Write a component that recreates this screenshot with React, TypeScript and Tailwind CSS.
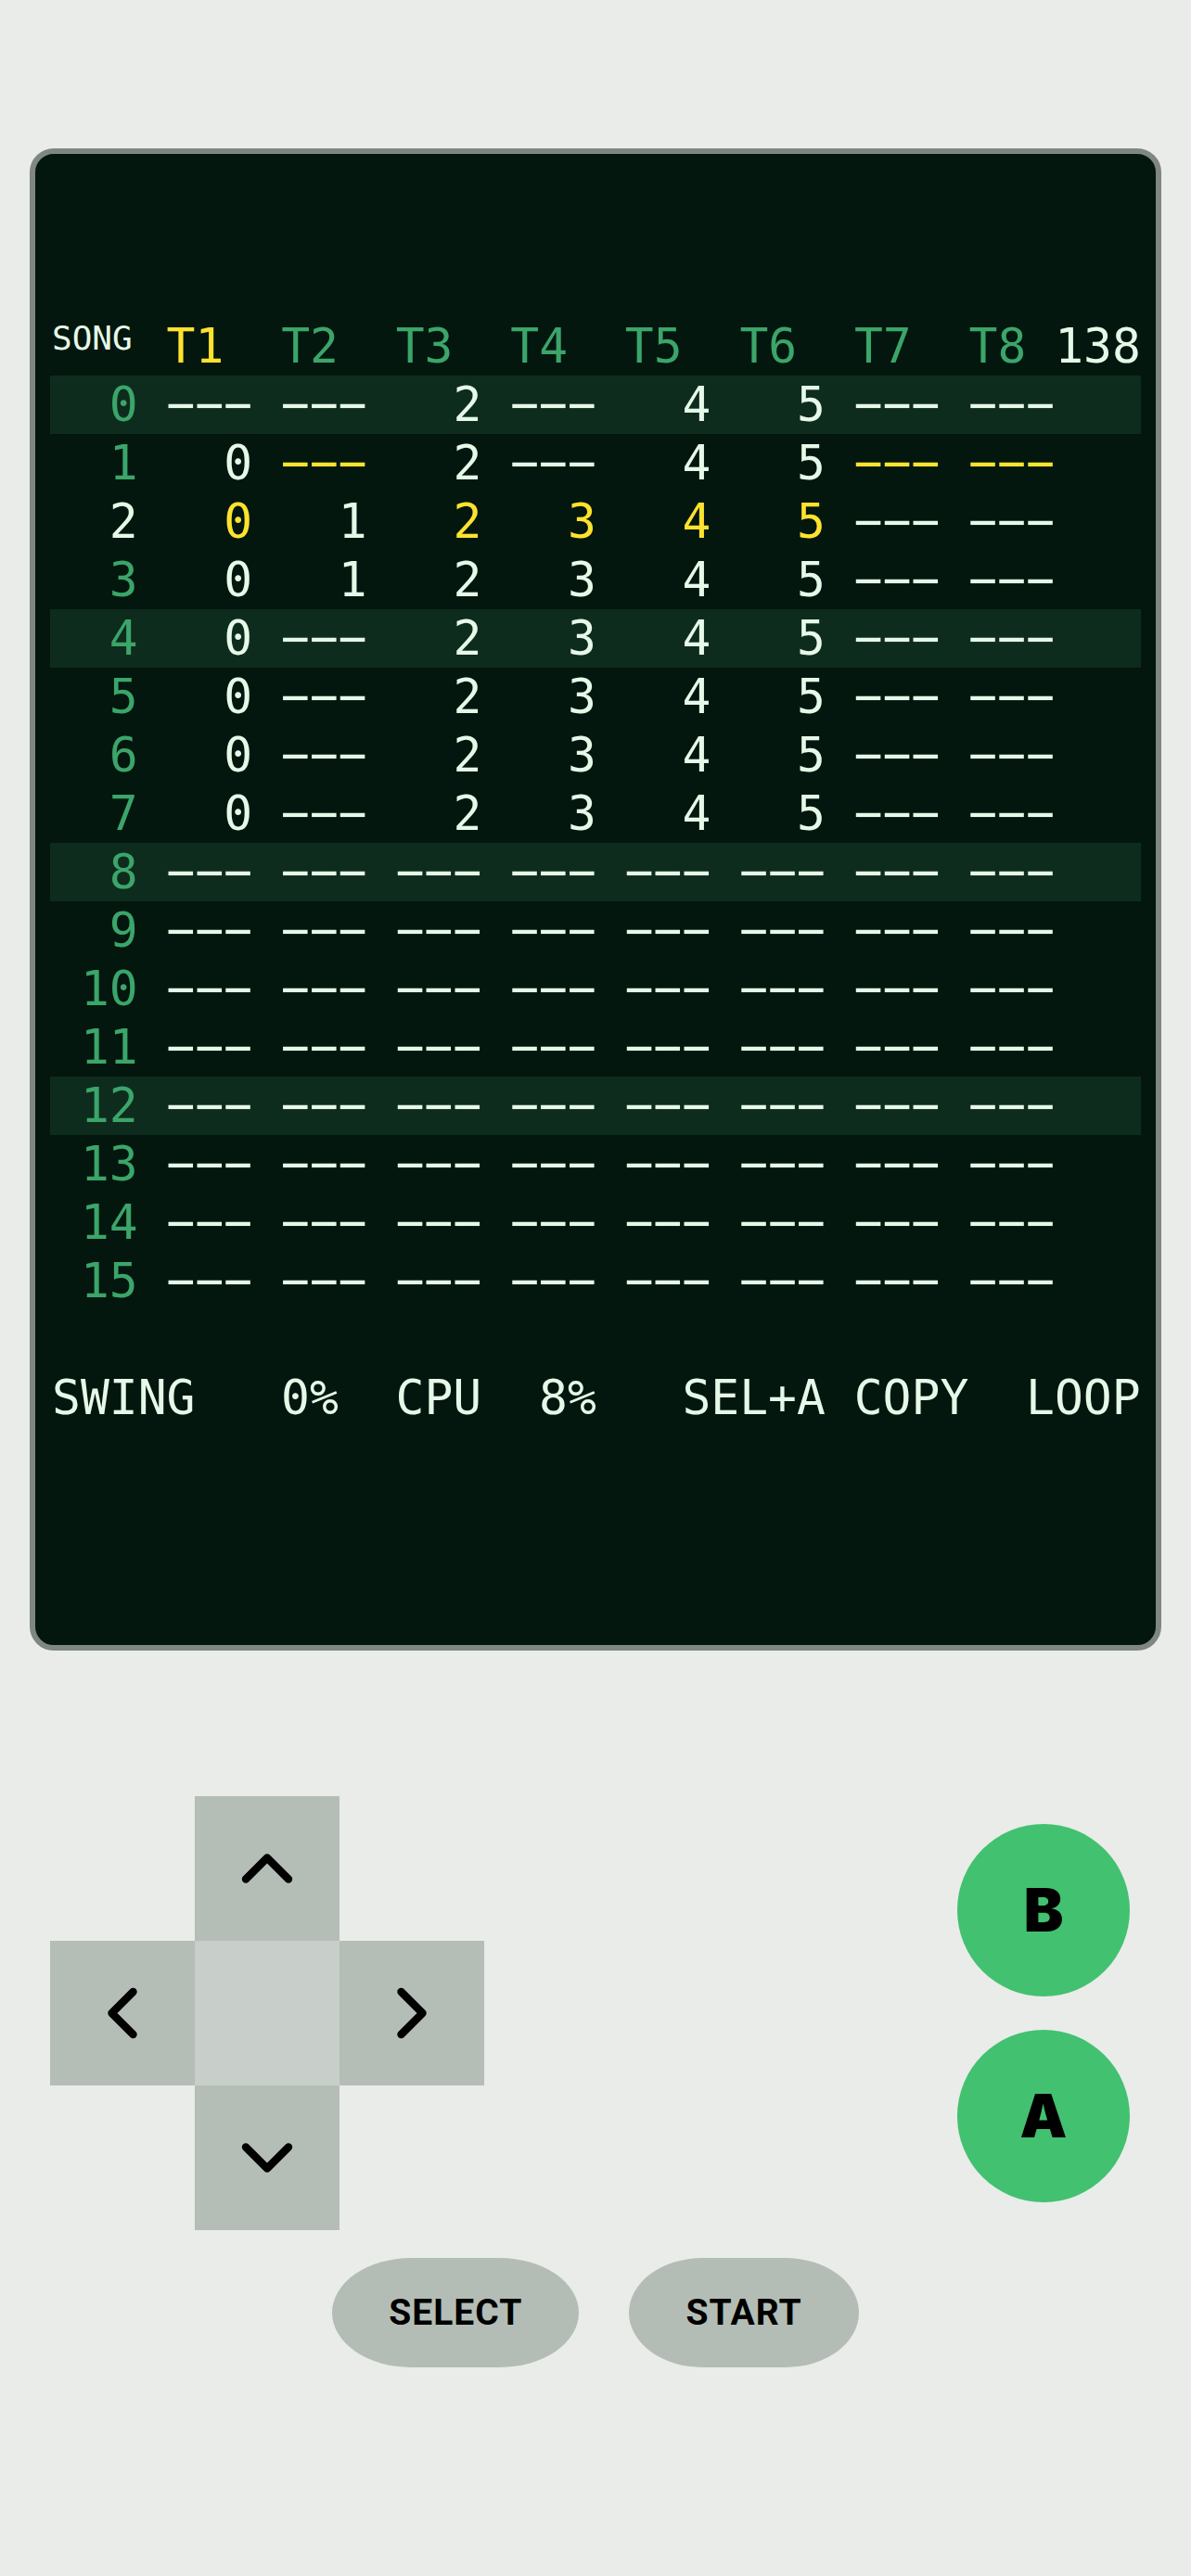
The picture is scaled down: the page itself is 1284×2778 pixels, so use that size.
import React from 'react';
import { ChevronUp, ChevronDown, ChevronLeft, ChevronRight } from 'lucide-react';

// empty slot in the song grid (minus signs keep the dashes long, like the device font)
const NONE = '\u2212\u2212\u2212';

const EMPTY = [NONE, NONE, NONE, NONE, NONE, NONE, NONE, NONE];
const CHAINS = ['0', NONE, '2', '3', '4', '5', NONE, NONE];

const rows: string[][] = [
  [NONE, NONE, '2', NONE, '4', '5', NONE, NONE],
  ['0', NONE, '2', NONE, '4', '5', NONE, NONE],
  ['0', '1', '2', '3', '4', '5', NONE, NONE],
  ['0', '1', '2', '3', '4', '5', NONE, NONE],
  CHAINS,
  CHAINS,
  CHAINS,
  CHAINS,
  EMPTY, EMPTY, EMPTY, EMPTY, EMPTY, EMPTY, EMPTY, EMPTY,
];

// cells drawn in yellow (selection / playing chains)
const yellow: Record<number, number[]> = {
  1: [1, 6, 7],
  2: [0, 2, 3, 4, 5],
};

const tracks = ['T1', 'T2', 'T3', 'T4', 'T5', 'T6', 'T7', 'T8'];

function SongRow({ index, cells }: { index: number; cells: string[] }) {
  const highlighted = index % 4 === 0;
  const labelColor = index === 2 ? 'text-[#e6f9e9]' : 'text-[#3ba56a]';
  return (
    <div
      className={`h-[63px] pl-[2px] leading-[63px] whitespace-pre ${highlighted ? 'bg-[#0e2c1d]' : ''}`}
    >
      <span className={labelColor}>{String(index).padStart(3, ' ')}</span>
      {cells.map((v, i) => (
        <span
          key={i}
          className={yellow[index]?.includes(i) ? 'text-[#fde22f]' : 'text-[#e6f9e9]'}
        >
          {' ' + v.padStart(3, ' ')}
        </span>
      ))}
    </div>
  );
}

function Screen() {
  return (
    <div className="h-[1620px] rounded-[26px] border-[6px] border-[#7f8781] bg-[#03170e] px-4 pt-[176px] font-['DejaVu_Sans_Mono','Liberation_Mono',monospace] text-[51.3px]">
      <div className="flex h-[63px] pl-[2px] leading-[63px] whitespace-pre">
        <div className="w-[123.6px] shrink-0">
          <div className="mt-[5px] text-[36px] leading-[36px] text-[#e6f9e9]">SONG</div>
        </div>
        <div>
          {tracks.map((t, i) => (
            <React.Fragment key={t}>
              <span className={i === 0 ? 'text-[#fde22f]' : 'text-[#3ba56a]'}>{t}</span>
              {i < 7 ? '  ' : ' '}
            </React.Fragment>
          ))}
          <span className="text-[#e6f9e9]">138</span>
        </div>
      </div>

      {rows.map((cells, i) => (
        <SongRow key={i} index={i} cells={cells} />
      ))}

      <div className="h-[63px]" />

      <div className="h-[63px] pl-[2px] leading-[63px] whitespace-pre text-[#e6f9e9]">
        {'SWING   0%  CPU  8%   SEL+A COPY  LOOP'}
      </div>
    </div>
  );
}

function DPad() {
  const icon = { size: 92, strokeWidth: 2.2, color: '#000' };
  return (
    <div className="grid grid-cols-[156px_156px_156px] grid-rows-[156px_156px_156px]">
      <div />
      <button className="flex items-center justify-center bg-[#b4beb6]">
        <ChevronUp {...icon} />
      </button>
      <div />
      <button className="flex items-center justify-center bg-[#b4beb6]">
        <ChevronLeft {...icon} />
      </button>
      <div className="bg-[#c8cfca]" />
      <button className="flex items-center justify-center bg-[#b4beb6]">
        <ChevronRight {...icon} />
      </button>
      <div />
      <button className="flex items-center justify-center bg-[#b4beb6]">
        <ChevronDown {...icon} />
      </button>
      <div />
    </div>
  );
}

function RoundButton({ label }: { label: string }) {
  return (
    <button className="flex h-[186px] w-[186px] items-center justify-center rounded-full bg-[#42c171] font-['Inter',sans-serif] text-[64px] font-black text-black">
      {label}
    </button>
  );
}

function PillButton({ label }: { label: string }) {
  return (
    <button className="flex h-[118px] items-center justify-center rounded-[32%/50%] bg-[#b4bdb5] px-[61px] font-['Roboto','Liberation_Sans',sans-serif] text-[39px] font-bold tracking-[1px] text-black">
      {label}
    </button>
  );
}

export default function App() {
  return (
    <div className="min-h-screen bg-[#e9ece9] px-8 pt-[160px]">
      <Screen />

      <div className="mt-[157px] flex items-center justify-between pl-[22px] pr-[34px]">
        <DPad />
        <div className="flex flex-col gap-[36px]">
          <RoundButton label="B" />
          <RoundButton label="A" />
        </div>
      </div>

      <div className="mt-[30px] flex justify-center gap-[54px]">
        <PillButton label="SELECT" />
        <PillButton label="START" />
      </div>
    </div>
  );
}
